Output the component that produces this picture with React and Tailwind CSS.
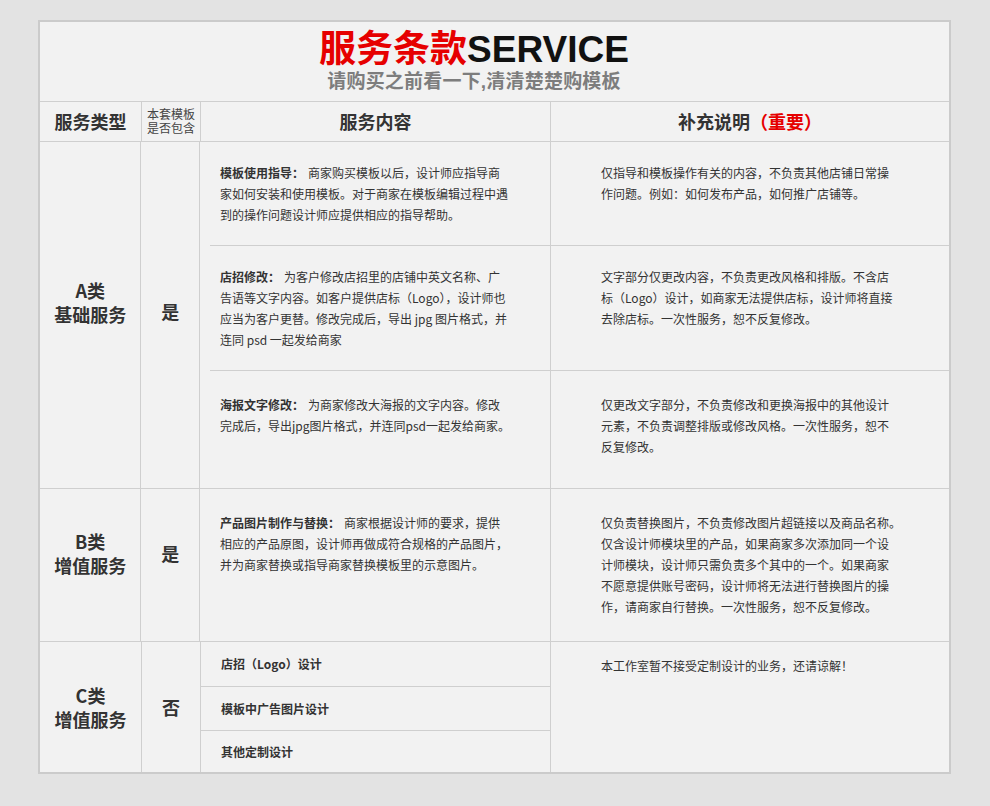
import React from "react";

const body = { fontFamily: "'Noto Sans CJK SC', 'Liberation Sans', sans-serif" };
const latinFirst = { fontFamily: "'Liberation Sans', 'Noto Sans CJK SC', sans-serif" };

function Lines({ lines, label }) {
  return (
    <div className="text-[12px] leading-[21px] text-[#333]">
      {lines.map((l, i) => (
        <div key={i} className="whitespace-nowrap">
          {i === 0 && label ? <span className="font-bold mr-[4px]">{label}</span> : null}
          {l}
        </div>
      ))}
    </div>
  );
}

function SubRow({ h, pt, label, mid, right }) {
  return (
    <div className={`flex ${h}`}>
      <div className={`w-[350px] pl-[20px] ${pt}`}>
        <Lines label={label} lines={mid} />
      </div>
      <div className={`w-[399px] border-l border-[#cfcfcf] pl-[50px] ${pt}`}>
        <Lines lines={right} />
      </div>
    </div>
  );
}

function Divider() {
  return <div className="ml-[10px] h-px bg-[#cfcfcf]" />;
}

function TypeCell({ a, b, pb }) {
  return (
    <div className={`w-[101px] flex flex-col items-center justify-center text-[18px] leading-[24px] font-bold text-[#333] ${pb}`}>
      <div>{a}</div>
      <div>{b}</div>
    </div>
  );
}

function YesCell({ t, pb }) {
  return (
    <div className={`w-[59px] border-l border-[#cfcfcf] flex items-center justify-center text-[18px] font-bold text-[#333] ${pb}`}>
      {t}
    </div>
  );
}

export default function App() {
  return (
    <div className="min-h-screen bg-[#e3e3e3] pt-[20px] pb-[32px]" style={body}>
      <div className="ml-[38px] w-[913px] border-2 border-[#cbcbcb] bg-[#f2f2f2]">
        {/* title */}
        <div className="h-[79px] flex flex-col items-center pr-[41px] pt-[8px]" style={latinFirst}>
          <div className="flex items-center text-[37px] leading-[40px] font-bold">
            <span className="text-[#e60000]">服务条款</span>
            <span className="text-[#111]">SERVICE</span>
          </div>
          <div className="text-[19px] leading-[23px] font-bold text-[#7d7d7d] tracking-[0.2px]">请购买之前看一下,清清楚楚购模板</div>
        </div>

        {/* header */}
        <div className="flex h-[40px] border-t border-[#cfcfcf]">
          <div className="w-[101px] flex items-center justify-center text-[18px] font-bold text-[#333]">服务类型</div>
          <div className="w-[59px] border-l border-[#cfcfcf] flex flex-col items-center justify-center text-[12px] leading-[14px] text-[#444]" style={latinFirst}>
            <div>本套模板</div>
            <div>是否包含</div>
          </div>
          <div className="w-[350px] border-l border-[#cfcfcf] flex items-center justify-center text-[18px] font-bold text-[#333]">服务内容</div>
          <div className="w-[399px] border-l border-[#cfcfcf] flex items-center justify-center text-[18px] font-bold text-[#333]">
            补充说明<span className="text-[#e60000]">（重要）</span>
          </div>
        </div>

        {/* A */}
        <div className="flex border-t border-[#cfcfcf]">
          <TypeCell a="A类" b="基础服务" pb="pb-[26px]" />
          <YesCell t="是" pb="pb-[8px]" />
          <div className="w-[750px] border-l border-[#cfcfcf] flex flex-col">
            <SubRow
              h="h-[103px]"
              pt="pt-[20px]"
              label="模板使用指导："
              mid={["商家购买模板以后，设计师应指导商", "家如何安装和使用模板。对于商家在模板编辑过程中遇", "到的操作问题设计师应提供相应的指导帮助。"]}
              right={["仅指导和模板操作有关的内容，不负责其他店铺日常操", "作问题。例如：如何发布产品，如何推广店铺等。"]}
            />
            <Divider />
            <SubRow
              h="h-[124px]"
              pt="pt-[20px]"
              label="店招修改："
              mid={["为客户修改店招里的店铺中英文名称、广", "告语等文字内容。如客户提供店标（Logo），设计师也", "应当为客户更替。修改完成后，导出 jpg 图片格式，并", "连同 psd 一起发给商家"]}
              right={["文字部分仅更改内容，不负责更改风格和排版。不含店", "标（Logo）设计，如商家无法提供店标，设计师将直接", "去除店标。一次性服务，恕不反复修改。"]}
            />
            <Divider />
            <SubRow
              h="h-[117px]"
              pt="pt-[23px]"
              label="海报文字修改："
              mid={["为商家修改大海报的文字内容。修改", "完成后，导出jpg图片格式，并连同psd一起发给商家。"]}
              right={["仅更改文字部分，不负责修改和更换海报中的其他设计", "元素，不负责调整排版或修改风格。一次性服务，恕不", "反复修改。"]}
            />
          </div>
        </div>

        {/* B */}
        <div className="flex border-t border-[#cfcfcf]">
          <TypeCell a="B类" b="增值服务" pb="pb-[24px]" />
          <YesCell t="是" pb="pb-[24px]" />
          <div className="w-[750px] border-l border-[#cfcfcf] flex flex-col">
            <SubRow
              h="h-[152px]"
              pt="pt-[23px]"
              label="产品图片制作与替换："
              mid={["商家根据设计师的要求，提供", "相应的产品原图，设计师再做成符合规格的产品图片，", "并为商家替换或指导商家替换模板里的示意图片。"]}
              right={["仅负责替换图片，不负责修改图片超链接以及商品名称。", "仅含设计师模块里的产品，如果商家多次添加同一个设", "计师模块，设计师只需负责多个其中的一个。如果商家", "不愿意提供账号密码，设计师将无法进行替换图片的操", "作，请商家自行替换。一次性服务，恕不反复修改。"]}
            />
          </div>
        </div>

        {/* C */}
        <div className="flex border-t border-[#cfcfcf]">
          <TypeCell a="C类" b="增值服务" pb="pb-0" />
          <YesCell t="否" pb="pb-0" />
          <div className="w-[350px] border-l border-[#cfcfcf] flex flex-col text-[12px] font-bold text-[#333]">
            <div className="h-[44px] flex items-center pl-[20px]">店招（Logo）设计</div>
            <div className="h-[44px] border-t border-[#cfcfcf] flex items-center pl-[20px]">模板中广告图片设计</div>
            <div className="h-[42px] border-t border-[#cfcfcf] flex items-center pl-[20px]">其他定制设计</div>
          </div>
          <div className="w-[399px] border-l border-[#cfcfcf] pl-[50px] pt-[13px]">
            <Lines lines={["本工作室暂不接受定制设计的业务，还请谅解！"]} />
          </div>
        </div>
      </div>
    </div>
  );
}
